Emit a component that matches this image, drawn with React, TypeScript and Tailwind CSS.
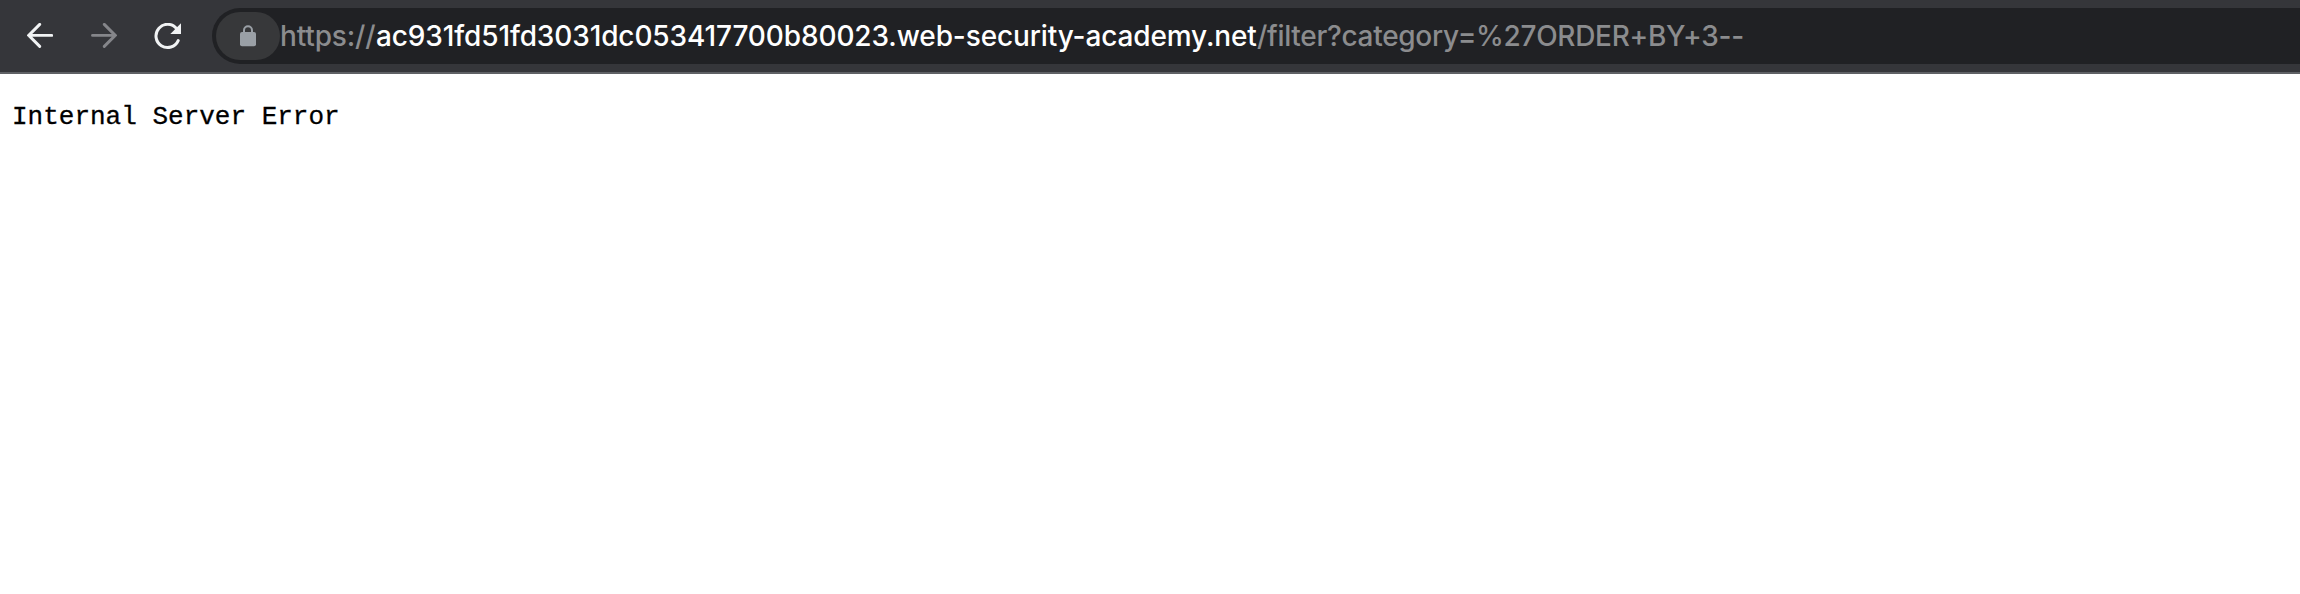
function BackIcon() {
  return (
    <svg className="h-[26px] w-[26px]" viewBox="0 0 26 26" fill="none" stroke="#f1f3f4" strokeWidth="2.9" strokeLinecap="round">
      <path d="M12.7 1.4 1.7 12.4 12.7 23.4M1.7 12.4H24.7" />
    </svg>
  );
}

function ForwardIcon() {
  return (
    <svg className="h-[26px] w-[26px]" viewBox="0 0 26 26" fill="none" stroke="#85868a" strokeWidth="2.9" strokeLinecap="round">
      <path d="M13.3 1.4 24.3 12.4 13.3 23.4M24.3 12.4H1.5" />
    </svg>
  );
}

function ReloadIcon() {
  return (
    <svg className="h-7 w-7" viewBox="0 0 28 28" fill="none">
      <path d="M22.6 5.6A11.6 11.6 0 1 0 24.2 17.6" stroke="#f1f3f4" strokeWidth="3" strokeLinecap="round" />
      <path d="M27 .3V11H16.3Z" fill="#f1f3f4" />
    </svg>
  );
}

function LockIcon() {
  return (
    <svg className="h-[22px] w-4" viewBox="0 0 16 22" fill="none">
      <path d="M4 8V5.3a4 4 0 0 1 8 0V8" stroke="#9aa0a6" strokeWidth="2" />
      <rect y="7" width="16" height="14.3" rx="2" fill="#9aa0a6" />
    </svg>
  );
}

export default function App() {
  return (
    <div className="h-[594px] w-full overflow-hidden bg-white">
      <header className="flex h-[74px] border-b-2 border-[#5f6165] bg-[#35363a] py-2">
        <nav className="flex w-[212px] shrink-0 items-start pl-[27px] pt-[15px]">
          <button className="block" aria-label="Back"><BackIcon /></button>
          <button className="ml-[38px] block" aria-label="Forward"><ForwardIcon /></button>
          <button className="ml-[37px] block" aria-label="Reload"><ReloadIcon /></button>
        </nav>
        <div className="flex h-14 grow items-center rounded-l-full bg-[#202124] pl-1">
          <div className="flex h-12 w-16 shrink-0 items-center justify-center rounded-full bg-[#37383a]">
            <LockIcon />
          </div>
          <div className="flex whitespace-pre font-['Inter',sans-serif] text-[28px] font-medium leading-[56px] text-[#8b8c8e]">
            <span className="w-24 shrink-0 tracking-[-0.15px]">https://</span>
            <span className="w-[881px] shrink-0 tracking-[-0.12px] text-white">ac931fd51fd3031dc053417700b80023.web-security-academy.net</span>
            <span className="tracking-[-0.3px]">/filter?category=%27ORDER+BY+3--</span>
          </div>
        </div>
      </header>
      <main className="px-3 pt-[27px]">
        <pre className="font-['Liberation_Mono',monospace] text-[26px] leading-8 text-black [-webkit-text-stroke:0.3px_black]">Internal Server Error</pre>
      </main>
    </div>
  );
}
